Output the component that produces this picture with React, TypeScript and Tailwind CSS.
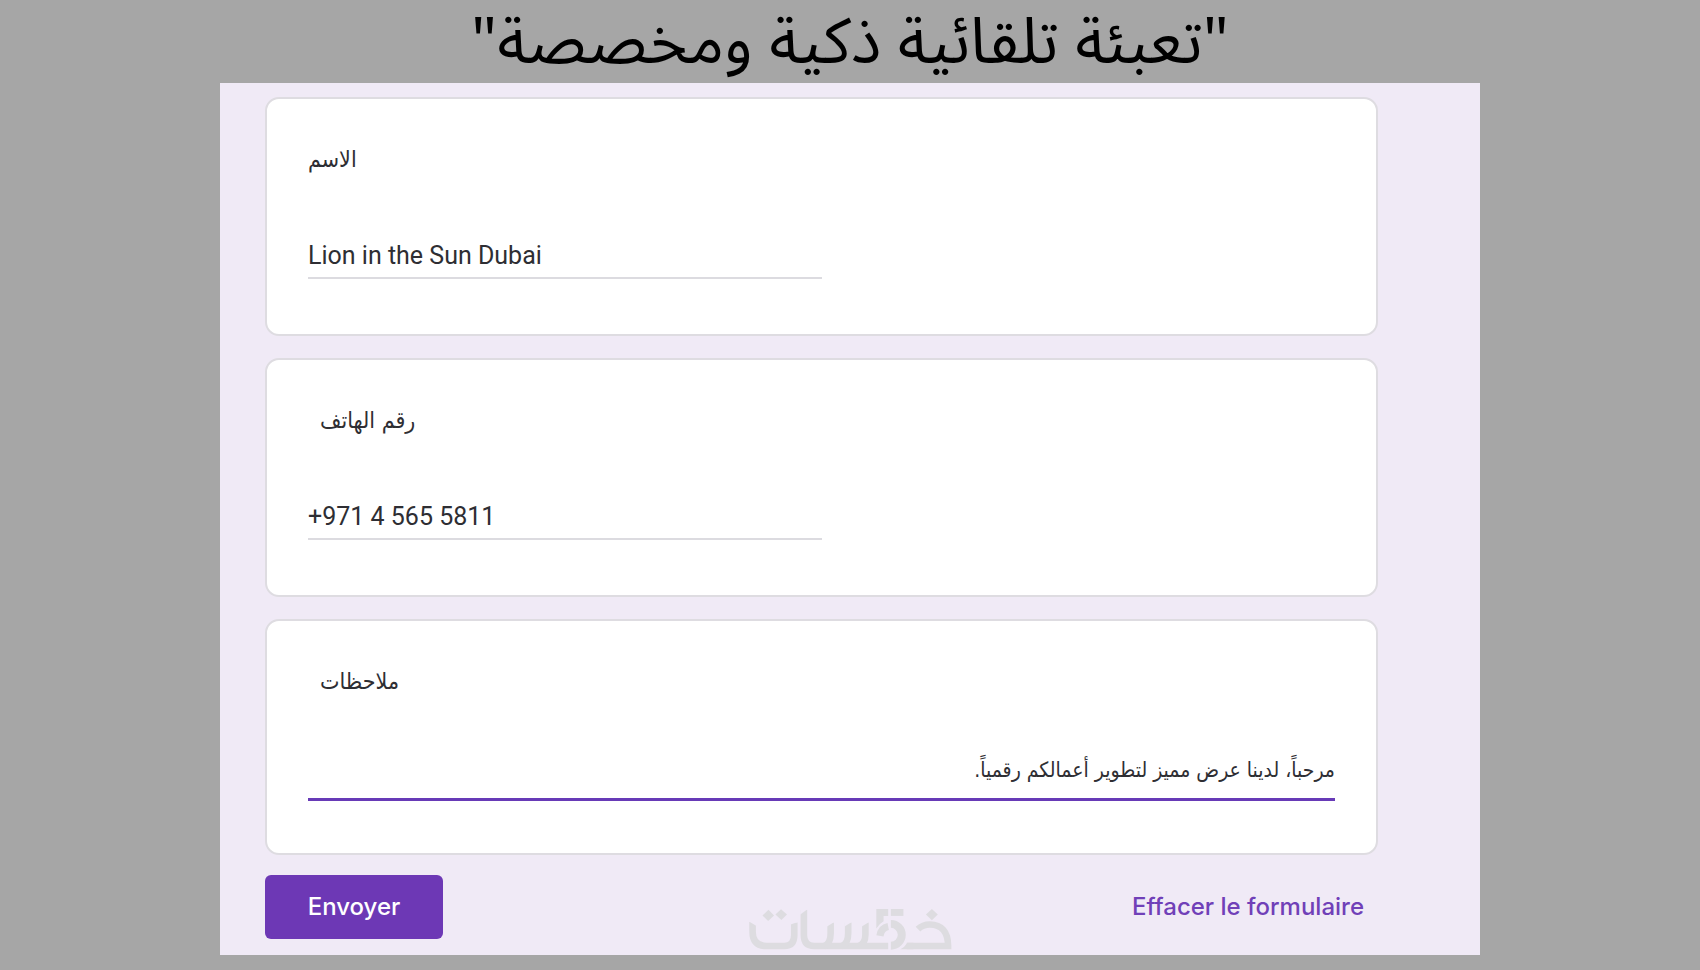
type FieldProps = {
  id: string;
  label: string;
  value: string;
  type?: string;
  indented?: boolean;
  active?: boolean;
};

function FieldCard({ id, label, value, type = "text", indented = false, active = false }: FieldProps) {
  return (
    <section
      className={`rounded-[14px] border-2 border-[#dedce1] bg-white px-[41px] pt-[44px] ${
        active ? "pb-[52px]" : "pb-[55px]"
      }`}
    >
      <label
        htmlFor={id}
        className={`block text-left text-[23px] leading-8 font-['DejaVu_Sans_Condensed','DejaVu_Sans',sans-serif] ${
          indented ? "pl-3" : ""
        }`}
      >
        <bdi dir="rtl">{label}</bdi>
      </label>
      {active ? (
        <textarea
          id={id}
          rows={1}
          dir="rtl"
          defaultValue={value}
          className="mt-12 block h-14 w-full resize-none overflow-hidden border-b-[3px] border-[#673ab7] bg-transparent text-[21px] leading-[50px] font-['DejaVu_Sans_Condensed','DejaVu_Sans',sans-serif] outline-none"
        />
      ) : (
        <input
          id={id}
          type={type}
          defaultValue={value}
          className="mt-[58px] block h-[46px] w-1/2 border-b-2 border-[#dcdbe0] bg-transparent text-[25px] font-[Roboto,sans-serif] outline-none"
        />
      )}
    </section>
  );
}

function Watermark() {
  return (
    <svg viewBox="50 40 620 130" className="h-[43px] w-[207px] text-[#dddce0]" aria-hidden="true">
      <g fill="none" stroke="currentColor" strokeWidth="20">
        <path d="M64 82 V112 Q64 155 106 155 H160 Q190 155 190 122 V84" />
        <path d="M219 46 V122 Q219 155 250 155 H474" />
        <path d="M300 84 V116 Q300 148 280 155" />
        <path d="M353 84 V116 Q353 148 333 155" />
        <path d="M405 84 V120 Q405 148 385 155" />
        <path d="M482 154 A33 33 0 0 0 482 88" strokeWidth="24" />
        <path d="M449 124 Q453 100 474 96" strokeWidth="22" />
        <path d="M564 104 Q578 90 600 90 C635 90 655 112 655 155 H530" />
      </g>
      <g fill="currentColor">
        <path d="M94 63 L112 45 L129 63 L111 79 Z" />
        <path d="M133 60 L150 44 L168 60 L151 76 Z" />
        <path d="M438 43 H474 V64 H460 V80 Q446 88 438 102 Z" />
        <path d="M482 43 H520 V64 H482 Z" />
        <path d="M588 60 L606 43 L624 60 L606 77 Z" />
        <path d="M511 165 Q524 158 532 145 H550 V165 Z" />
      </g>
      <g fill="#f0eaf6">
        <path d="M208 44 H230 L208 60 Z" />
        <path d="M289 82 H311 L289 96 Z" />
        <path d="M342 82 H364 L342 96 Z" />
        <path d="M394 82 H416 L394 96 Z" />
        <path d="M179 82 H201 L179 90 Z" />
        <path d="M53 81 H75 V94 Z" />
      </g>
    </svg>
  );
}

export default function App() {
  return (
    <div className="min-h-screen bg-[#a6a6a6] pb-[15px] text-[#2e2e33]">
      <h1
        dir="rtl"
        className="h-[83px] text-center text-[64px] leading-[85px] whitespace-nowrap text-black font-['Noto_Sans_Arabic','Noto_Sans',sans-serif]"
      >
        "تعبئة تلقائية ذكية ومخصصة"
      </h1>
      <main className="relative mx-auto w-full max-w-[1260px] bg-[#f0eaf6] pt-[14px] pr-[102px] pb-4 pl-[45px]">
        <form onSubmit={(e) => e.preventDefault()}>
          <div className="flex flex-col gap-[22px]">
            <FieldCard id="name" label="الاسم" value="Lion in the Sun Dubai" />
            <FieldCard id="phone" type="tel" label="رقم الهاتف" value="+971 4 565 5811" indented />
            <FieldCard
              id="notes"
              label="ملاحظات"
              value="مرحباً، لدينا عرض مميز لتطوير أعمالكم رقمياً."
              indented
              active
            />
          </div>
          <div className="mt-5 flex h-16 items-center justify-between pr-[14px]">
            <button
              type="submit"
              className="h-full w-[178px] rounded-md bg-[#6d38b5] text-[24px] font-medium text-white font-['Inter',sans-serif]"
            >
              Envoyer
            </button>
            <button type="reset" className="text-[24px] font-medium text-[#7040b8] font-['Inter',sans-serif]">
              Effacer le formulaire
            </button>
          </div>
        </form>
        <div className="pointer-events-none absolute inset-x-0 bottom-1 flex justify-center">
          <Watermark />
        </div>
      </main>
    </div>
  );
}
